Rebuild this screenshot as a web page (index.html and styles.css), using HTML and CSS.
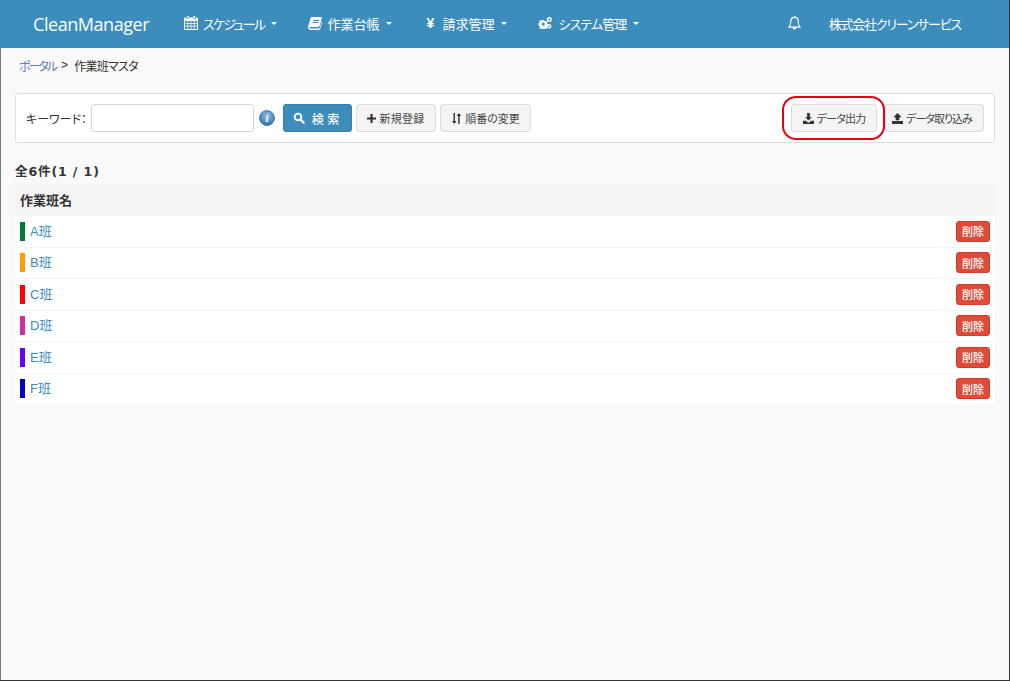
FILE: index.html
```html
<!DOCTYPE html>
<html lang="ja">
<head>
<meta charset="utf-8">
<title>作業班マスタ</title>
<link rel="stylesheet" href="styles.css">
</head>
<body>
<div class="frame">
  <header class="navbar">
    <a class="brand">CleanManager</a>
    <nav class="menu">
      <a class="menu-item">
        <svg class="nav-icon" viewBox="0 0 14 14"><path fill="#fff" d="M3 0h1.500v2H3zM9.500 0H11v2H9.500zM1 1.500h1.500V3h2V1.500h5V3h2V1.500H13a1 1 0 0 1 1 1V13a1 1 0 0 1-1 1H1a1 1 0 0 1-1-1V2.500a1 1 0 0 1 1-1zM1 5v2h2.500V5zm3.250 0v2h2.400V5zm3.100 0v2h2.400V5zm3.150 0v2H13V5zM1 7.700v2h2.500v-2zm3.250 0v2h2.400v-2zm3.100 0v2h2.400v-2zm3.150 0v2H13v-2zM1 10.400V13h2.500v-2.600zm3.250 0V13h2.400v-2.600zm3.100 0V13h2.400v-2.600zm3.150 0V13H13v-2.600z" fill-rule="evenodd"/></svg>
        <span class="tight-schedule">スケジュール</span><i class="caret"></i>
      </a>
      <a class="menu-item">
        <svg class="nav-icon" viewBox="0 0 14 14"><path fill="#fff" fill-rule="evenodd" d="M4 1h9.300c.5 0 .7.400.6.800l-2.300 8c-.2.700-.7 1.200-1.500 1.200H2.200c-.5 0-.9.600-.7 1 .1.300.4.500.8.500h8.500c.4 0 .8-.2.900-.6l2.300-7.400.6.400-2.400 8c-.2.700-.9 1.100-1.600 1.100H2.200C1 13.500 0 12.500 0 11.300c0-.3 0-.5.100-.8L2.600 2.300C2.800 1.500 3.300 1 4 1zm1 3v1h6V4zm-.5 2v1h6V6z"/></svg>
        <span>作業台帳</span><i class="caret"></i>
      </a>
      <a class="menu-item">
        <span class="nav-icon yen">¥</span>
        <span>請求管理</span><i class="caret"></i>
      </a>
      <a class="menu-item">
        <svg class="nav-icon gears" viewBox="0 0 16 14"><path fill="#fff" fill-rule="evenodd" d="M5 3.500h2l.3 1.300 1 .4 1.100-.7 1.400 1.400-.7 1.100.4 1 1.300.3v2l-1.300.3-.4 1 .7 1.100-1.400 1.400-1.100-.7-1 .4-.3 1.200H5l-.3-1.200-1-.4-1.100.7-1.400-1.400.7-1.100-.4-1L.2 9.300v-2l1.300-.3.4-1-.7-1.100 1.400-1.400 1.100.7 1-.4zM6 6.500a1.800 1.800 0 1 0 0 3.600 1.800 1.800 0 0 0 0-3.600z"/><circle cx="13" cy="3" r="2.100" fill="none" stroke="#fff" stroke-width="1.700"/><circle cx="13" cy="10.800" r="1.800" fill="none" stroke="#fff" stroke-width="1.600"/></svg>
        <span class="tight-system">システム管理</span><i class="caret"></i>
      </a>
    </nav>
    <div class="nav-right">
      <svg class="bell" viewBox="0 0 14 15"><path fill="none" stroke="#fff" stroke-width="1.200" d="M7 1.500c-2.500 0-4 1.800-4 4 0 3.500-.6 5-2 6.500h12c-1.400-1.500-2-3-2-6.500 0-2.200-1.500-4-4-4z"/><path fill="#fff" d="M7 0a1 1 0 0 1 1 1v1H6V1a1 1 0 0 1 1-1zM5 12.500h4a2 2 0 0 1-4 0z"/></svg>
      <span class="company">株式会社クリーンサービス</span>
    </div>
  </header>

  <div class="breadcrumb"><a class="link">ポータル</a><span class="sep">&gt;</span><span class="current">作業班マスタ</span></div>

  <main class="content">
    <section class="toolbar">
      <label class="keyword-label">キーワード：</label>
      <input class="keyword" type="text">
      <svg class="info" viewBox="0 0 16 16"><defs><radialGradient id="ig" cx="50%" cy="35%" r="65%"><stop offset="0" stop-color="#9cc4e8"/><stop offset="1" stop-color="#2f6da8"/></radialGradient></defs><circle cx="8" cy="8" r="7.500" fill="url(#ig)" stroke="#3a6f9f" stroke-width=".8"/><text x="8" y="12" text-anchor="middle" class="info-i">i</text></svg>
      <button class="btn primary search">
        <svg class="btn-icon big" viewBox="0 0 14 14"><circle cx="5.800" cy="5.800" r="3.900" fill="none" stroke="#fff" stroke-width="2.200"/><path d="M8.800 8.800l3.700 3.700" stroke="#fff" stroke-width="2.600" stroke-linecap="round"/></svg>
        <span class="spaced">検 索</span>
      </button>
      <button class="btn new">
        <svg class="btn-icon small" viewBox="0 0 10 10"><path fill="#333" d="M3.800 0h2.400v3.800H10v2.400H6.200V10H3.800V6.200H0V3.800h3.800z"/></svg>
        <span class="tracked">新規登録</span>
      </button>
      <button class="btn order">
        <svg class="btn-icon" viewBox="0 0 12 13"><path fill="#333" d="M2.500 0h1.700v9.500H6L3.350 13 .7 9.500h1.800zM8 13h1.700V3.500h1.800L8.850 0 6.200 3.500H8z"/></svg>
        <span>順番の変更</span>
      </button>
      <div class="toolbar-right">
        <button class="btn export">
          <svg class="btn-icon" viewBox="0 0 12 12"><path fill="#333" d="M4.500 0h3v4.500h2.300L6 8.300 2.200 4.500h2.300zM0 8.500h3.300L5 10.200c.6.500 1.400.500 2 0l1.700-1.700H12V12H0z"/></svg>
          <span class="tight-export">データ出力</span>
        </button>
        <button class="btn import">
          <svg class="btn-icon" viewBox="0 0 12 12"><path fill="#333" d="M6 0l4.500 4.500H8v3.500H4V4.500H1.500zM0 8.800h12V12H0z"/></svg>
          <span class="tight-import">データ取り込み</span>
        </button>
        <div class="highlight"></div>
      </div>
    </section>

    <p class="count">全6件(1 / 1)</p>

    <section class="list">
      <div class="list-head">作業班名</div>
      <div class="row"><i class="swatch green"></i><a class="link">A班</a><button class="del">削除</button></div>
      <div class="row"><i class="swatch orange"></i><a class="link">B班</a><button class="del">削除</button></div>
      <div class="row"><i class="swatch red"></i><a class="link">C班</a><button class="del">削除</button></div>
      <div class="row"><i class="swatch pink"></i><a class="link">D班</a><button class="del">削除</button></div>
      <div class="row"><i class="swatch violet"></i><a class="link">E班</a><button class="del">削除</button></div>
      <div class="row"><i class="swatch blue"></i><a class="link">F班</a><button class="del">削除</button></div>
    </section>
  </main>
</div>
</body>
</html>
```
FILE: styles.css
```css
* { box-sizing: border-box; }
html, body { margin: 0; height: 100%; overflow: hidden; }
body {
  font-family: "Liberation Sans", "Noto Sans CJK JP", sans-serif;
  font-feature-settings: "palt";
  font-size: 12px;
  color: #333;
  background: #f9f9f9;
}
.frame {
  height: 681px;
  border-right: 1px solid #333;
  border-bottom: 1px solid #333;
  position: relative;
}
.frame::before {
  content: "";
  position: absolute;
  left: 0;
  top: 48px;
  bottom: 0;
  width: 1px;
  background: #777;
}
.navbar {
  height: 48px;
  background: #3c8dbc;
  color: #fff;
  display: flex;
  align-items: center;
  padding-left: 33px;
}
.brand {
  font-family: "Open Sans", sans-serif;
  font-size: 18px;
  width: 151px;
  letter-spacing: -.45px;
}
.menu { display: flex; align-items: center; font-size: 13px; margin-top: -2px; }
.menu-item { display: flex; align-items: center; margin-right: 31px; }
.tight-schedule { letter-spacing: -1.700px; }
.tight-system { letter-spacing: -.9px; }
.nav-icon { width: 14px; height: 14px; margin-right: 5px; display: block; }
.nav-icon.gears { width: 14px; height: 12px; margin-right: 6px; }
.yen { font-weight: 700; font-size: 14px; line-height: 14px; text-align: center; font-family: "Liberation Sans", sans-serif; }
.caret {
  width: 0; height: 0; margin-left: 7px;
  border-left: 3px solid transparent;
  border-right: 3px solid transparent;
  border-top: 3px solid #fff;
}
.nav-right { margin-left: auto; display: flex; align-items: center; font-size: 13px; padding-right: 48px; margin-top: -2px; }
.company { letter-spacing: -1.200px; }
.bell { width: 13px; height: 14px; margin-right: 28px; display: block; }
.breadcrumb {
  height: 34px;
  padding: 0 0 0 19px;
  display: flex;
  align-items: center;
  font-size: 12px;
  color: #333;
}
.sep { margin: 0 6px 0 5px; }
.link { color: #3c8dbc; }
.breadcrumb .link { color: #5a7fb5; letter-spacing: -2px; }
.current { letter-spacing: -.7px; }
.content { padding: 11px 14px 0 15px; }
.toolbar {
  height: 50px;
  background: #fff;
  border: 1px solid #ddd;
  border-radius: 3px;
  display: flex;
  align-items: center;
  padding: 0 10px;
}
.keyword-label { width: 65px; white-space: nowrap; font-size: 12px; }
.keyword {
  width: 163px;
  height: 28px;
  border: 1px solid #d2d6de;
  border-radius: 3px;
  background: #fff;
  padding: 0 6px;
}
.info { width: 16px; height: 16px; margin: 0 8px 0 5px; display: block; }
.info-i { font: italic 700 11px "Liberation Serif", serif; fill: #fff; }
.btn {
  height: 28px;
  border: 1px solid #ddd;
  border-radius: 3px;
  background: #f4f4f4;
  color: #444;
  font: 11px "Liberation Sans", "Noto Sans CJK JP", sans-serif;
  font-feature-settings: "palt";
  display: inline-flex;
  align-items: center;
  justify-content: center;
  padding: 0;
  margin-right: 4px;
  white-space: nowrap;
}
.btn.primary { background: #3c8dbc; border-color: #367fa9; color: #fff; }
.btn-icon { width: 11px; height: 11px; margin-right: 3px; display: block; }
.btn-icon.small { width: 9px; height: 9px; }
.btn-icon.big { width: 12px; height: 12px; }
.spaced { font-size: 12px; margin-left: 4px; font-weight: 500; }
.tracked { letter-spacing: .3px; }
.tight-export { letter-spacing: -.8px; }
.tight-import { letter-spacing: -1px; }
.search { width: 69px; padding-right: 3px; }
.new { width: 80px; }
.order { width: 91px; }
.toolbar-right { margin-left: auto; display: flex; position: relative; }
.export { width: 86px; margin-right: 8px; }
.import { width: 99px; margin-right: 0; padding-right: 5px; }
.highlight {
  position: absolute;
  left: -9px;
  top: -8px;
  width: 103px;
  height: 44px;
  border: 2px solid #e60012;
  border-radius: 14px;
}
.count {
  margin: 20px 0 0;
  height: 22px;
  line-height: 17px;
  font-family: "DejaVu Sans", "Noto Sans CJK JP", sans-serif;
  font-size: 12.500px;
  letter-spacing: .9px;
  font-weight: 700;
  color: #333;
}
.list-head {
  height: 31px;
  background: #f4f4f4;
  display: flex;
  align-items: center;
  padding: 0 0 2px 5px;
  font-size: 13px;
  font-weight: 700;
}
.row {
  height: 31.500px;
  background: #fff;
  border-bottom: 1px solid #f4f4f4;
  display: flex;
  align-items: center;
  padding: 0 5px;
  font-size: 13px;
}
.row:last-child { border-bottom: 0; height: 30.500px; }
.row .link { margin-top: -2px; }
.swatch { width: 5px; height: 19px; margin-right: 5px; display: block; }
.green { background: #007b33; }
.orange { background: #ff9d00; }
.red { background: #ff0000; }
.pink { background: #d02f9c; }
.violet { background: #6600ff; }
.blue { background: #0000c8; }
.del {
  margin-left: auto;
  width: 34px;
  height: 21px;
  border: 1px solid #d73925;
  border-radius: 3px;
  background: #dd4b39;
  color: #fff;
  font: 500 11px "Liberation Sans", "Noto Sans CJK JP", sans-serif;
  padding: 0;
}
```
